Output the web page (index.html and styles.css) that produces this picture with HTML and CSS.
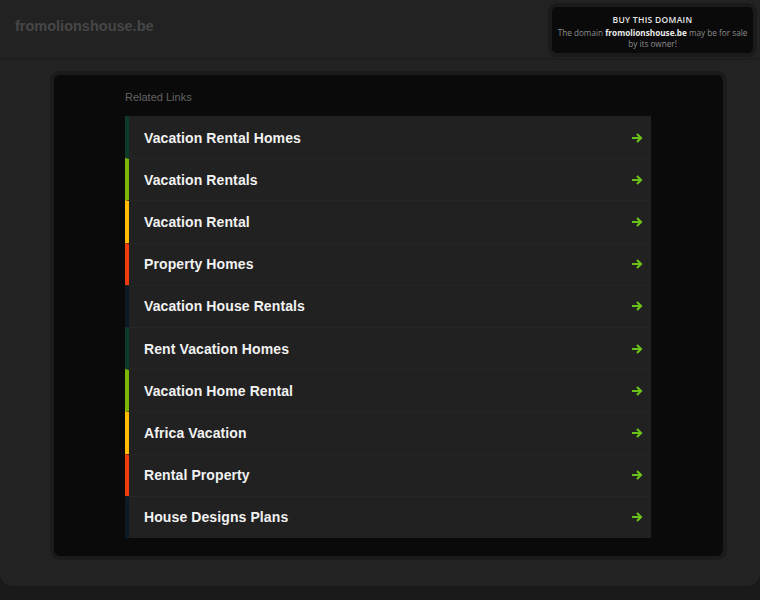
FILE: index.html
```html
<!DOCTYPE html>
<html>
<head>
<meta charset="utf-8">
<link rel="stylesheet" href="styles.css">
</head>
<body>
<div class="page">
  <header class="header">
    <div class="domain">fromolionshouse.be</div>
    <div class="buy">
      <div class="buy-title">BUY THIS DOMAIN</div>
      <div class="buy-text">The domain <b>fromolionshouse.be</b> may be for sale<br>by its owner!</div>
    </div>
  </header>
  <main class="main">
    <div class="panel">
      <div class="label">Related Links</div>
      <ul class="links">
        <li class="c1"><span>Vacation Rental Homes</span><svg class="arr" viewBox="0 0 12 10"><path d="M1 5H10M6 1L10 5L6 9"/></svg></li>
        <li class="c2"><span>Vacation Rentals</span><svg class="arr" viewBox="0 0 12 10"><path d="M1 5H10M6 1L10 5L6 9"/></svg></li>
        <li class="c3"><span>Vacation Rental</span><svg class="arr" viewBox="0 0 12 10"><path d="M1 5H10M6 1L10 5L6 9"/></svg></li>
        <li class="c4"><span>Property Homes</span><svg class="arr" viewBox="0 0 12 10"><path d="M1 5H10M6 1L10 5L6 9"/></svg></li>
        <li class="c5"><span>Vacation House Rentals</span><svg class="arr" viewBox="0 0 12 10"><path d="M1 5H10M6 1L10 5L6 9"/></svg></li>
        <li class="c1"><span>Rent Vacation Homes</span><svg class="arr" viewBox="0 0 12 10"><path d="M1 5H10M6 1L10 5L6 9"/></svg></li>
        <li class="c2"><span>Vacation Home Rental</span><svg class="arr" viewBox="0 0 12 10"><path d="M1 5H10M6 1L10 5L6 9"/></svg></li>
        <li class="c3"><span>Africa Vacation</span><svg class="arr" viewBox="0 0 12 10"><path d="M1 5H10M6 1L10 5L6 9"/></svg></li>
        <li class="c4"><span>Rental Property</span><svg class="arr" viewBox="0 0 12 10"><path d="M1 5H10M6 1L10 5L6 9"/></svg></li>
        <li class="c5"><span>House Designs Plans</span><svg class="arr" viewBox="0 0 12 10"><path d="M1 5H10M6 1L10 5L6 9"/></svg></li>
      </ul>
    </div>
  </main>
</div>
</body>
</html>
```

FILE: styles.css
```css
html, body {
  margin: 0;
  padding: 0;
  background: #1a1a1a;
  font-family: "Liberation Sans", Arial, sans-serif;
}
.page {
  background: #222222;
  height: 586px;
  border-radius: 0 0 12px 12px;
  box-shadow: 0 2px 2px #161616;
}
.header {
  position: relative;
  height: 58px;
  border-bottom: 1px solid #1d1d1d;
  box-shadow: 0 1px 1px #1f1f1f;
}
.domain {
  padding: 18px 0 0 15px;
  font-size: 14.5px;
  font-weight: bold;
  color: #474747;
  line-height: 17px;
}
.buy {
  position: absolute;
  top: 3px;
  right: 3px;
  width: 201px;
  height: 46px;
  background: #0a0a0a;
  border: 4px solid #1a1a1a;
  border-radius: 9px;
  text-align: center;
  font-family: "Open Sans", "Lato", sans-serif;
}
.buy-title {
  margin-top: 7px;
  font-size: 8.5px;
  letter-spacing: 0.3px;
  color: #e8e8e8;
  font-weight: 600;
  line-height: 12px;
  margin-bottom: 1px;
}
.buy-text {
  font-size: 8.2px;
  color: #8c8c8c;
  line-height: 11px;
  padding: 0;
  white-space: nowrap;
}
.buy-text b {
  color: #ececec;
  font-weight: 700;
}
.main {
  padding: 12px 33px 0 50px;
}
.panel {
  box-sizing: border-box;
  background: #0a0a0a;
  border: 4px solid #1b1b1b;
  border-radius: 10px;
  height: 489px;
  padding: 16px 72px 0 71px;
}
.label {
  font-size: 11px;
  color: #636363;
  line-height: 13px;
  margin-bottom: 12px;
}
.links {
  list-style: none;
  margin: 0;
  padding: 0;
  background: #212121;
}
.links li {
  display: flex;
  align-items: center;
  justify-content: space-between;
  height: 42.2px;
  box-sizing: border-box;
  border-left: 4px solid #0c3b29;
  border-top: 1px solid #262626;
  padding: 0 8px 0 15px;
  color: #f2f2f2;
  font-size: 14px;
  font-weight: bold;
  letter-spacing: 0.1px;
}
.links li:first-child {
  border-top-color: #212121;
}
.links li.c2 { border-left-color: #7ab800; }
.links li.c3 { border-left-color: #ffbc00; }
.links li.c4 { border-left-color: #f03c0c; }
.links li.c5 { border-left-color: #0b1a24; }
.arr {
  width: 12px;
  height: 10px;
  fill: none;
  stroke: #6cc01a;
  stroke-width: 2.2;
}
```
